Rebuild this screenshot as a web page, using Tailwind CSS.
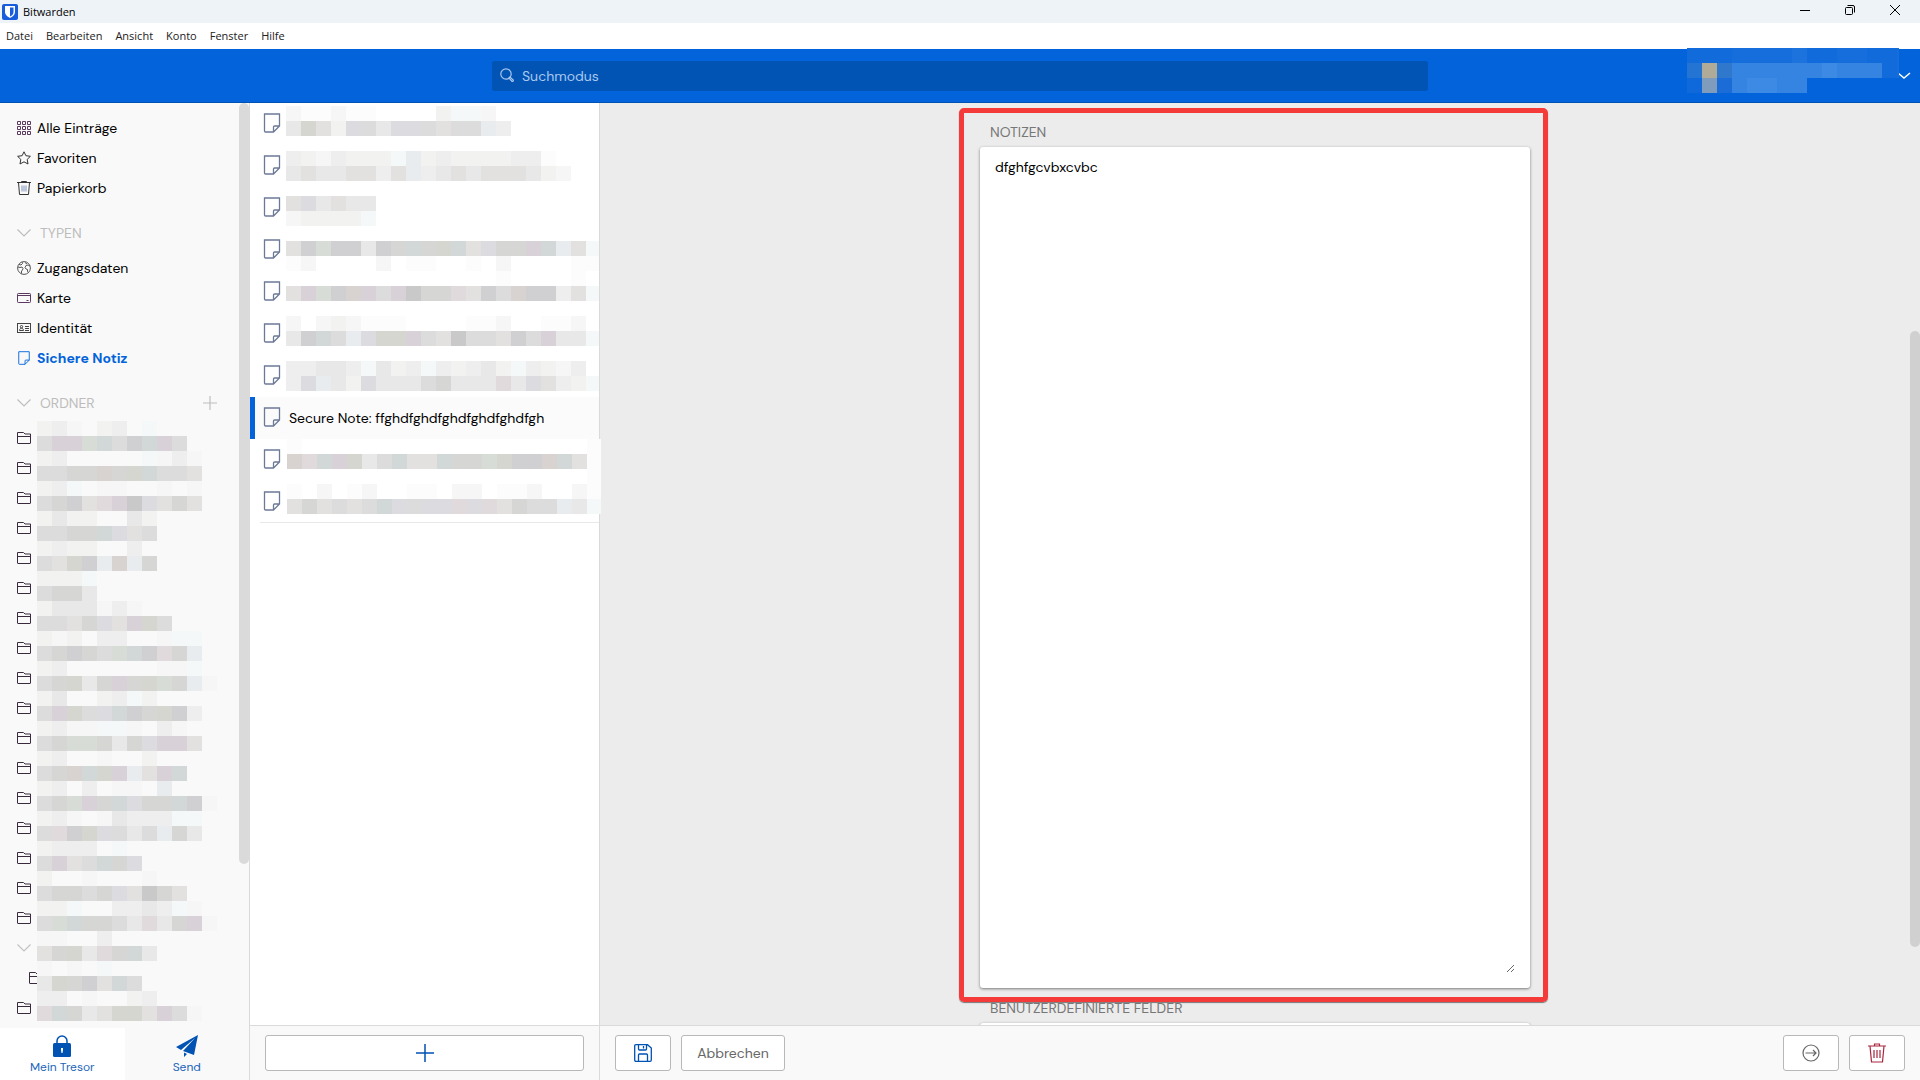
<!DOCTYPE html>
<html lang="de">
<head>
<meta charset="utf-8">
<meta name="viewport" content="width=device-width, initial-scale=1">
<title>Bitwarden</title>
<script src="https://cdn.jsdelivr.net/npm/@tailwindcss/browser@4"></script>
</head>
<body class="flex h-screen flex-col overflow-hidden bg-white font-['DM_Sans','Inter',sans-serif] text-sm leading-5 text-black">

<!-- Shared icons -->
<svg class="hidden" aria-hidden="true">
  <symbol id="note" viewBox="0 0 18 20"><path d="M1.500 1h15v12l-6 6h-8a1 1 0 0 1-1-1zM10.500 19v-5a1 1 0 0 1 1-1h5" fill="none" stroke="currentColor" stroke-width="1.300"/></symbol>
  <symbol id="folder" viewBox="0 0 14 14"><path d="M.5 5.500h13M.5 12V1.500h6L8 3h5.500v9q0 .5-.5.5H1q-.5 0-.5-.5z" fill="none" stroke="currentColor"/></symbol>
  <symbol id="chevron" viewBox="0 0 14 14"><path d="M.5 3.500 7 10l6.500-6.500" fill="none" stroke="currentColor" stroke-width="1.200"/></symbol>
  <symbol id="trash" viewBox="0 0 18 20"><path d="M0 3h18M6.500 3V1h5v2M2 3l1.500 16h11L16 3M6 7v8M9 7v8M12 7v8" fill="none" stroke="currentColor" stroke-width="1.200"/></symbol>
  <symbol id="plus" viewBox="0 0 18 18"><path d="M9 0v18M0 9h18" fill="none" stroke="currentColor" stroke-width="1.500"/></symbol>
</svg>

<!-- Window title -->
<div class="flex h-[23px] shrink-0 items-center bg-[#eef3f8] pl-0.5 font-['Segoe_UI','Open_Sans',sans-serif] text-[11px]">
  <svg class="mr-[5px] size-4" viewBox="0 0 16 16"><rect width="16" height="16" rx="2" fill="#175ddc"/><path d="M3 2h10v6c0 3-3 5-5 6-2-1-5-3-5-6z" fill="#fff"/><path d="M8 3.500h3.500V8c0 2-1.500 3.500-3.500 4.500z" fill="#175ddc"/></svg>
  <span>Bitwarden</span>
  <div class="ml-auto flex items-center gap-[35px] pr-5 pb-[3px]">
    <button aria-label="Minimieren"><svg class="size-2.5" viewBox="0 0 10 10"><path d="M0 5.500h10" stroke="#000"/></svg></button>
    <button aria-label="Verkleinern"><svg class="size-2.5 overflow-visible" viewBox="0 0 10 10" fill="none" stroke="#000"><rect x=".5" y="2.500" width="7" height="7" rx="1"/><path d="M2.500.5H8q1.500 0 1.500 1.500v5.500"/></svg></button>
    <button aria-label="Schließen"><svg class="size-2.5" viewBox="0 0 10 10"><path d="m0 0 10 10M10 0 0 10" stroke="#000"/></svg></button>
  </div>
</div>
<nav class="flex h-[26px] shrink-0 items-center gap-[13px] pl-1.5 font-['Segoe_UI','Open_Sans',sans-serif] text-[11px] text-[#222]" aria-label="Menü">
  <button>Datei</button><button>Bearbeiten</button><button>Ansicht</button><button>Konto</button><button>Fenster</button><button>Hilfe</button>
</nav>

<!-- Search header -->
<header class="relative flex h-[54px] shrink-0 items-center justify-center border-b border-[#0052b3] bg-[#0263da]">
  <label class="flex h-[30px] w-[936px] items-center gap-2 rounded-[3px] bg-[#0153b4] pl-2 text-[#a9c8ee]">
    <svg class="mb-0.5 size-3.5" viewBox="0 0 14 14" fill="none" stroke="currentColor" stroke-width="1.200"><circle cx="6" cy="6" r="5.200"/><path d="m9 10 1-1 3.300 3q.3 1.500-1.200 1.500z"/></svg>
    <input type="search" aria-label="Suchmodus" placeholder="Suchmodus" class="flex-1 bg-transparent outline-none placeholder:text-[#a9c8ee]">
  </label>
  <button class="absolute right-[9px] top-[19px] text-white" aria-label="Konto wechseln"><svg class="size-3.5" viewBox="0 0 14 14"><path d="m1 5 6 5 6-5" fill="none" stroke="currentColor" stroke-width="1.500"/></svg></button>
  <div class="absolute -top-px right-[21px] w-[212px] overflow-hidden" data-mosaic="BBBCCCCDBBCCBBC/FKGHHHHHHIHHHBC/ALEHIIHH"></div>
</header>

<div class="flex min-h-0 flex-1">
  <!-- Sidebar -->
  <aside class="flex w-[250px] shrink-0 flex-col border-r border-[#dadada] bg-[#f9f9f9]">
    <div class="relative min-h-0 flex-1 overflow-hidden pt-2.5">
      <ul class="*:flex *:h-[30px] *:items-center *:gap-1.5 *:pl-[17px]">
        <li><svg class="size-3.5" viewBox="0 0 14 14" fill="none" stroke="#5a3a5e"><path d="M.5.5h3v3h-3zM5.500.5h3v3h-3zM10.500.5h3v3h-3zM.5 5.500h3v3h-3zM5.500 5.500h3v3h-3zM10.500 5.500h3v3h-3zM.5 10.500h3v3h-3zM5.500 10.500h3v3h-3zM10.500 10.500h3v3h-3z"/></svg><a href="#">Alle Einträge</a></li>
        <li><svg class="size-3.5" viewBox="0 0 14 14" fill="none" stroke="#333"><path d="m7 .8 1.900 3.900 4.500.6-3.200 3.100.8 4.600-4-2.200L3 13l.8-4.600L.6 5.300l4.500-.6z"/></svg><a href="#">Favoriten</a></li>
        <li><svg class="size-3.5" viewBox="0 0 14 14" fill="none" stroke="#333"><path d="M0 1.500h14M4.500 1V.5h5V1M1.500 1.500l1 12h9l1-12"/><path d="M5 4.500v6M7 4.500v6M9 4.500v6" stroke="#7f93bd"/></svg><a href="#">Papierkorb</a></li>
      </ul>
      <h2 class="mt-[15px] flex h-[30px] items-center gap-[9px] pl-[17px] text-[#bdbdbd]"><svg class="size-3.5"><use href="#chevron"/></svg>TYPEN</h2>
      <ul class="mt-[5px] *:flex *:h-[30px] *:items-center *:gap-1.5 *:pl-[17px]">
        <li><svg class="size-3.5" viewBox="0 0 14 14" fill="none" stroke="#444" stroke-width=".9"><circle cx="7" cy="7" r="6.400"/><path d="M2 3.500l2 .5 1.500-1.500L5 1M1 6l2 .5L5 6l1 1.500L5.500 9l-1 1v2.500M13 5l-2-1-2 .5-1 2L9 8l1.500.5v2l1 1M8 1.500l2 1.500"/></svg><a href="#">Zugangsdaten</a></li>
        <li><svg class="size-3.5" viewBox="0 0 14 14" fill="none" stroke="#5a3a5e"><rect x=".5" y="2.500" width="13" height="9" rx=".8"/><path d="M.5 4.500h13M9.500 9.500h2"/></svg><a href="#">Karte</a></li>
        <li><svg class="size-3.5" viewBox="0 0 14 14" fill="none" stroke="#444"><rect x=".5" y="2.500" width="13" height="9"/><circle cx="4.500" cy="5.700" r="1.200"/><path d="M2.500 9.500c0-3 4-3 4 0zM8 5.500h4M8 7.500h4M8 9.500h4"/></svg><a href="#">Identität</a></li>
        <li class="font-bold text-[#0263da]"><svg class="size-3.5"><use href="#note"/></svg><a href="#">Sichere Notiz</a></li>
      </ul>
      <h2 class="mt-[15px] flex h-[30px] items-center gap-[9px] pl-[17px] text-[#bdbdbd]"><svg class="size-3.5"><use href="#chevron"/></svg>ORDNER
        <button class="mr-8 ml-auto" aria-label="Ordner hinzufügen"><svg class="size-3.5"><use href="#plus"/></svg></button></h2>
      <div class="relative pt-[5px]">
        <ul id="folders" class="text-[#3a2a3e] *:flex *:h-[30px] *:items-center *:pl-[17px]"></ul>
        <div class="absolute top-[3px] left-[37px]" data-mosaic="cdb.cd.w/gppvqgiqpg/cd.....wbdb/gghhuhsqggf/cdw.bb..b.b/ghifxpjrfhf/cecc..ec/gghhqrfg/cdcc..d/gfsituth/cccw/ghhe/ceeebdb/ggfhrfpsg/cbc.dd..bww/ghihgvqixht/cd......bbw/ghsehphsvhtb/ce..cdwc/gpsgrqihsid/cdbbwwb.db/ghvvhehrppf/cd..b..c/ghuqsptfpq/cd.d.bb.t/ghvphqrhhqib/cdb.bedddww/gxisrgegthe/cddd.w/gpfgqhr/c..b...b/ghhghrfjhf/ccw..ddedwb/gvqhhgexehpb/bb..d/fhsexhqe/b.b.w/eshifqg/dd.b..cd/xqhefssfpgb"></div>
      </div>
      <div class="absolute top-0 right-0 h-[761px] w-2.5 rounded-full bg-[#dadada]"></div>
    </div>
    <div class="grid h-[52px] shrink-0 grid-cols-2 text-xs text-[#2264b9]">
      <button class="flex flex-col items-center gap-0.5 bg-white pt-[7px]"><svg class="h-[22px] w-[18px]" viewBox="0 0 18 22" fill="#0052b3"><path d="M4 9V6a5 5 0 0 1 10 0v3" fill="none" stroke="#0052b3" stroke-width="1.500"/><rect y="8" width="18" height="14" rx="1.500"/><path d="M8 13h2v2l-.5 3h-1L8 15z" fill="#fff"/></svg><span>Mein Tresor</span></button>
      <button class="flex flex-col items-center gap-0.5 pt-[7px]"><svg class="h-[22px] w-[22px]" viewBox="0 0 22 22" fill="#0052b3"><path d="M22 0 0 12l5 3L19 3 7 16l11 4zM8 17.500V22l3-3z"/></svg><span>Send</span></button>
    </div>
  </aside>

  <!-- Entries -->
  <section class="relative z-10 flex w-[350px] shrink-0 flex-col border-r border-[#dadada] bg-white" aria-label="Einträge">
    <div class="relative min-h-0 flex-1">
      <ul id="entries" class="*:flex *:h-[42px] *:items-center *:pl-[13px] text-[#6c7a96]"></ul>
      <div class="ml-2.5 h-px -mt-px bg-[#e8e8e8]"></div>
      <div class="absolute top-[3px] left-9 w-[313px] overflow-hidden" data-mosaic="baabaa....cwwb/esfcrgerrgfggtd//dcbdcccwtcdccccdda/efeeffdftdefefffecb//frefee/bccccw//fiviieihqhsqfrhhpqtfw/ab....b.aa..a.b....aa/..............a....a/fpviupgpjhhxfiguiidfw//b.bcbaaa....aab..aab/eiqgtrsspgfjggfigpeew//ddeedwecdwdcdecwdcbd/drtecreeegheeexerfdcw"></div>
      <div class="absolute top-[336px] left-[37px] w-[314px] overflow-hidden" data-mosaic="a...................a/uxqpsegqffqhhvsiiuqfa/....................a/a.b.ab..aa.bb.aab..ba/fhfgfgqrgrrxrxfhggtew"></div>
    </div>
    <div class="flex h-[55px] shrink-0 items-center border-t border-[#dadada] bg-[#f9f9f9] pr-[15px] pl-[15px]">
      <button class="flex h-9 flex-1 items-center justify-center rounded-[3px] border border-[#b8b8b8] bg-white text-[#0052b3]" aria-label="Eintrag hinzufügen"><svg class="size-[18px]"><use href="#plus"/></svg></button>
    </div>
  </section>

  <!-- Detail form -->
  <main class="flex min-w-0 flex-1 flex-col bg-[#ececec]">
    <div class="relative min-h-0 flex-1 overflow-hidden pr-2.5">
      <div class="mx-auto w-[550px]">
        <div class="relative pt-[19px]">
          <label for="notes" class="flex h-5 items-center pl-2.5 text-[#777]">NOTIZEN</label>
          <div class="mt-[5px] rounded-[3px] bg-white px-[15px] pt-2.5 pb-[15px] shadow-[0_1px_3px_#777]">
            <textarea id="notes" class="block h-[816px] w-full resize-y bg-white outline-none" spellcheck="false">dfghfgcvbxcvbc</textarea>
          </div>
          <div class="pointer-events-none absolute top-[5px] -right-[18px] -bottom-3.5 -left-[21px] rounded-[5px] border-[5px] border-[#f43b3a] shadow-[0_1px_1px_#777]"></div>
        </div>
        <h2 class="mt-2.5 flex h-5 items-center pl-2.5 text-[#777]">BENUTZERDEFINIERTE FELDER</h2>
        <div class="mt-[5px] h-12 rounded-[3px] bg-white shadow-[0_1px_3px_#777]"></div>
      </div>
      <div class="absolute top-[228px] right-0 h-[616px] w-2.5 rounded-full bg-[#d0d0d0]"></div>
    </div>
    <div class="flex h-[55px] shrink-0 items-center gap-2.5 border-t border-[#dadada] bg-[#f9f9f9] px-[15px] text-[#666] *:flex *:h-9 *:items-center *:justify-center *:rounded-[3px] *:border *:border-[#b8b8b8] *:bg-white">
      <button class="w-14" aria-label="Speichern"><svg class="size-[18px]" viewBox="0 0 18 18" fill="none" stroke="#0052b3" stroke-width="1.300"><path d="M2 .7h11.500L17.300 4v12q0 1.300-1.300 1.300H2Q.7 17.300.7 16V2Q.7.7 2 .7zM4.500.7V5q0 1 1 1h6q1 0 1-1V.7M9.500 2v2.500M4.500 17.300V11q0-1 1-1h7q1 0 1 1v6.300"/></svg></button>
      <button class="w-[104px]">Abbrechen</button>
      <button class="ml-auto w-14" aria-label="Verschieben"><svg class="size-[18px]" viewBox="0 0 18 18" fill="none" stroke="#666" stroke-width="1.200"><circle cx="9" cy="9" r="8"/><path d="M3.500 9h10.500M11 6l3 3-3 3"/></svg></button>
      <button class="w-14" aria-label="Löschen"><svg class="h-5 w-[18px] text-[#a8263c]"><use href="#trash"/></svg></button>
    </div>
  </main>
</div>

<script>
  const icon = (id, cls) => `<svg class="${cls}"><use href="#${id}"/></svg>`;

  // Folder rows; the 18th is an expanded parent with one nested child.
  document.getElementById('folders').innerHTML = Array.from({ length: 20 }, (_, i) => {
    if (i === 17) return `<li class="text-[#c3c3c3]">${icon('chevron', 'size-3.5')}</li>`;
    return `<li>${icon('folder', i === 18 ? 'size-3.5 ml-3' : 'size-3.5')}</li>`;
  }).join('');

  document.getElementById('entries').innerHTML = Array.from({ length: 10 }, (_, i) => i === 7
    ? `<li class="relative bg-[#fbfbfb]"><span class="absolute inset-y-0 left-0 w-[5px] bg-[#0263da]"></span>${icon('note', 'mb-0.5 h-5 w-[18px]')}<a href="#" class="ml-2 text-black">Secure Note: ffghdfghdfghdfghdfghdfgh</a></li>`
    : `<li>${icon('note', 'mb-0.5 h-5 w-[18px]')}</li>`).join('');

  // Blocks that hide private text: one letter per 15px cell, "/" ends a line.
  const palette = {
    a: '#fcfcfc', b: '#f6f6f6', c: '#f2f2f1', d: '#eeeeee', e: '#e8e8e8', f: '#e2e1e0', g: '#dcdcdc',
    h: '#d6d6d5', i: '#d0d0d2', j: '#c9c9c9', p: '#d8d2d8', q: '#d2d8d8', r: '#dcdce0', s: '#d6d6d0',
    t: '#e8ecef', u: '#d8d2d0', v: '#d8dcd6', w: '#f5f8f8', x: '#e0dadc',
    A: '#1069da', B: '#116bda', C: '#156edc', D: '#1d73dd', E: '#1b6cd6', F: '#2475d3', G: '#2f78cb',
    H: '#3684e2', I: '#3c8ae4', K: '#b0aa98', L: '#7f9cbd'
  };
  document.querySelectorAll('[data-mosaic]').forEach(el => {
    el.setAttribute('aria-hidden', 'true');
    el.innerHTML = el.dataset.mosaic.split('/').map(line =>
      `<div class="flex h-[15px]">${[...line].map(c => `<i class="w-[15px] shrink-0" style="background:${palette[c] || 'transparent'}"></i>`).join('')}</div>`).join('');
  });
</script>
</body>
</html>
